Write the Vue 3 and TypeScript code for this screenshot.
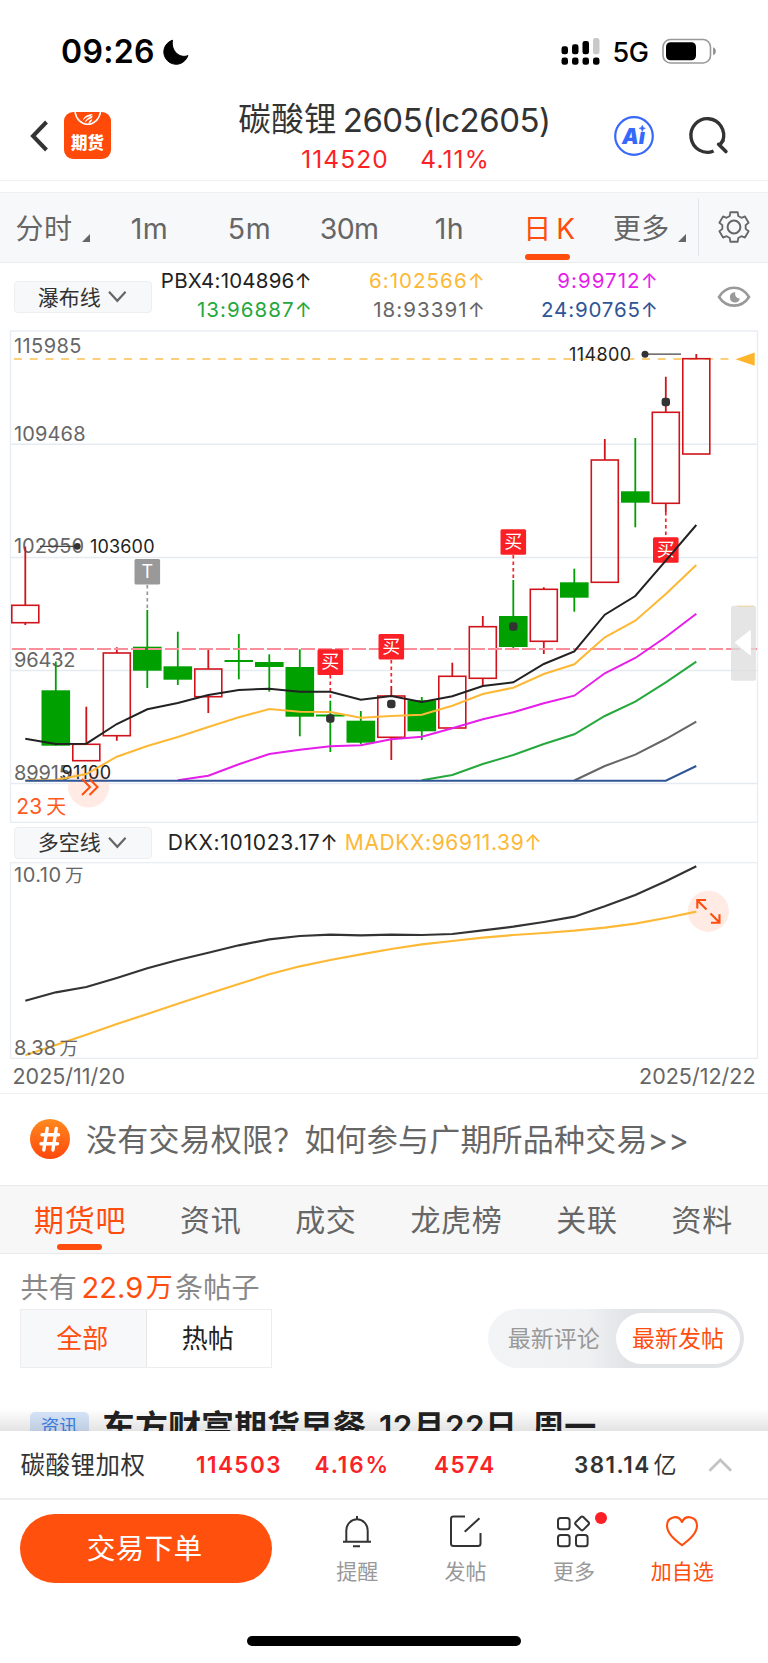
<script setup lang="ts">
interface Candle { top: number; open: number; close: number; bottom: number; up: boolean }
interface Series { color: string; from: number; ys: number[] }

const STEP = 30.5
const FIRST = 25.3
const xAt = (i: number): number => FIRST + i * STEP

const r = (top: number, open: number, close: number, bottom: number): Candle => ({ top, open, close, bottom, up: true })
const g = (top: number, open: number, close: number, bottom: number): Candle => ({ top, open, close, bottom, up: false })

const candles: Candle[] = [
  r(546.5, 605.3, 622.7, 625), g(661.5, 690.3, 745.7, 745.7), r(706.7, 744.3, 760.7, 760.7),
  r(647.3, 653, 735.7, 740.7), g(610, 646.7, 670.7, 688), g(631.7, 666.3, 679.7, 685),
  r(649, 669, 696.7, 713), g(634, 660, 662, 679.3), g(654.3, 662, 667, 691.7),
  g(649.3, 667, 716.7, 736.3), g(700.7, 714.5, 716.5, 752), g(711, 720.7, 742.7, 744.3),
  r(686, 696, 737.3, 760), g(697, 700.3, 731.3, 740), r(662.7, 676.3, 728, 728),
  r(616, 626.7, 678.3, 686), g(580, 616, 647, 648.7), r(587.3, 589.3, 641.3, 654),
  g(568.7, 582.3, 597.7, 611.7), r(439, 460, 582.3, 582.3), g(438, 491.3, 502.7, 527.3),
  r(376.7, 412.3, 503.3, 512), r(354, 358.7, 454, 454),
]

const averages: Series[] = [
  { color: '#222', from: 0, ys: [738.7, 744, 743.7, 724, 709.3, 703, 695, 690, 688.7, 691.7, 691.7, 699.7, 696, 702, 696.3, 686, 682.3, 664, 651.3, 614.7, 596, 560.7, 525] },
  { color: '#fdb836', from: 0, ys: [780.5, 780, 774, 756.7, 746, 737, 727, 717.3, 709, 711.7, 712, 717.7, 716, 714.7, 705.7, 694, 687.7, 674, 664.3, 637.3, 620.7, 594, 565] },
  { color: '#e61eea', from: 5, ys: [780.3, 775.7, 764.3, 754, 749.7, 746.3, 745.3, 739.3, 736.7, 728.3, 719.3, 712.3, 703.3, 695.7, 673.3, 658, 637, 613.7] },
  { color: '#25a83c', from: 13, ys: [780.3, 775, 764, 755, 744, 734.3, 716, 701.7, 682.3, 661.7] },
  { color: '#666', from: 18, ys: [780.5, 766, 754.7, 739, 721.7] },
  { color: '#2f5597', from: 0, ys: [...Array(22).fill(780.7), 766] },
]

const dkx: Series[] = [
  { color: '#333', from: 0, ys: [1000.7, 992.3, 987, 978, 968.3, 960, 952.7, 945.3, 939.3, 936, 934.7, 935.3, 934.7, 935, 934, 930.3, 926.7, 922, 916.7, 906.3, 895, 881.3, 866.3] },
  { color: '#fdb836', from: 0, ys: [1055.3, 1045, 1034.7, 1024, 1014, 1003.7, 993.7, 984, 974.3, 966.3, 960, 954.3, 949, 944.3, 941, 937.7, 935, 933, 930.7, 927.7, 923.7, 918, 911.7] },
]

const points = (s: Series): string => s.ys.map((y, i) => `${xAt(s.from + i).toFixed(1)},${y}`).join(' ')

const gridLines = [444.2, 557.4, 670.6, 783.5]
const priceLabels = [
  { text: '115985', y: 345.3, w: 67.5 }, { text: '109468', y: 433.3, w: 71.5 }, { text: '102950', y: 546, w: 70 },
  { text: '96432', y: 660, w: 61.5 }, { text: '89915', y: 772.3, w: 57 },
]

const marks = [
  { i: 4, y: 559, label: 'T', color: '#999', from: 585, to: 609 },
  { i: 10, y: 649.3, label: '买', color: '#fb1f26', from: 675, to: 701 },
  { i: 12, y: 634, label: '买', color: '#fb1f26', from: 660, to: 686 },
  { i: 16, y: 529.2, label: '买', color: '#fb1f26', from: 555, to: 580 },
  { i: 21, y: 537.2, label: '买', color: '#fb1f26', from: 512, to: 537 },
]
const dots = [{ i: 10, y: 718.5 }, { i: 12, y: 704 }, { i: 16, y: 626.5 }, { i: 21, y: 402 }]

const gearPath = ((): string => {
  const pts: string[] = []
  const at = (deg: number, rad: number): string => {
    const a = (deg * Math.PI) / 180
    return `${(17 + rad * Math.cos(a)).toFixed(2)} ${(17 + rad * Math.sin(a)).toFixed(2)}`
  }
  for (let k = 0; k < 6; k++) {
    const c = -90 + k * 60
    pts.push(at(c - 21, 11.8), at(c - 14, 15.2), at(c + 14, 15.2), at(c + 21, 11.8))
  }
  return `M${pts.join('L')}Z`
})()

const legends = [
  { text: 'PBX4:104896↑', cls: 'k a' }, { text: '6:102566↑', cls: 'y b' }, { text: '9:99712↑', cls: 'm b' },
  { text: '13:96887↑', cls: 'gr b' }, { text: '18:93391↑', cls: 'd b' }, { text: '24:90765↑', cls: 'bl c' },
]
const forumTabs = ['期货吧', '资讯', '成交', '龙虎榜', '关联', '资料']
</script>

<template>
  <div class="page">
    <div class="status">
      <span class="clock">09:26</span>
      <svg class="moon" width="28" height="28" viewBox="0 0 28 28"><path d="M10.5 2.2A12.3 12.3 0 1 0 25.9 17.5C18.5 21 8.5 13.5 10.5 2.2Z" fill="#000" stroke="#000" stroke-width="1" stroke-linejoin="round" /></svg>
      <svg class="signal" width="40" height="28" viewBox="0 0 40 28">
        <g fill="#000">
          <rect x="0.5" y="8.3" width="6.5" height="8" rx="2.4" /><rect x="11" y="6.3" width="6.5" height="10" rx="2.4" /><rect x="21.5" y="3" width="6.5" height="13.3" rx="2.4" />
          <rect v-for="n in 4" :key="n" :x="n * 10.5 - 10" y="19.5" width="6.5" height="7.3" rx="2.4" />
        </g>
        <rect x="32" y="0" width="6.5" height="16.3" rx="2.4" fill="#c9c9c9" />
      </svg>
      <span class="net">5G</span>
      <svg class="battery" width="56" height="28" viewBox="0 0 56 28">
        <rect x="1" y="1.5" width="47.5" height="23.5" rx="7.5" fill="none" stroke="#999" stroke-width="1.6" />
        <rect x="4" y="4.2" width="30" height="18" rx="4.5" fill="#000" />
        <path d="M51.2 9.3C54.6 10.6 54.6 15.9 51.2 17.2Z" fill="#888" />
      </svg>
    </div>

    <header class="header">
      <svg class="back" width="20" height="34" viewBox="0 0 20 34"><path d="M16.5 3L3 17L16.5 31" fill="none" stroke="#333" stroke-width="4" /></svg>
      <div class="logo">
        <svg width="47" height="17" viewBox="0 0 47 17">
          <path d="M11 0A13 15.3 0 0 0 36.5 0" fill="none" stroke="#fff" stroke-width="1.5" />
          <path d="M18.8 8.6C19.5 4.5 23.5 2 28.8 2.2L26.5 4.2C22.8 4.6 20.8 6.3 18.8 8.6ZM20.5 11.3C21.6 7.3 24.5 5 28.8 3.6L28 6C24.8 7 22.4 8.8 20.5 11.3ZM24.4 11.6C24.8 9.2 26.2 7.6 28.3 6.9C28 9.2 26.6 10.8 24.4 11.6Z" fill="#fff" />
        </svg>
        <span>期货</span>
      </div>
      <div class="title">
        <h1><span class="name">碳酸锂</span><span class="code">2605(lc2605)</span></h1>
        <p><span>114520</span><span class="pct">4.11%</span></p>
      </div>
      <svg class="ai" width="42" height="42" viewBox="0 0 42 42">
        <circle cx="21" cy="21" r="18.8" fill="none" stroke="#3668fb" stroke-width="2.2" />
        <text x="9" y="28.8" class="ai-text" textLength="23" lengthAdjust="spacingAndGlyphs">Ai</text>
        <rect x="26" y="9.5" width="8" height="7.5" fill="#fff" />
        <path d="M29.3 10.2L30.3 12.6L32.3 13.3L30.3 14.1L29.3 16.6L28.3 14.1L26.2 13.3L28.3 12.6Z" fill="#3668fb" stroke="#3668fb" stroke-width="0.6" />
      </svg>
      <svg class="search" width="42" height="42" viewBox="0 0 42 42">
        <path d="M34.8 26A16.4 16.8 0 1 0 25.6 36" fill="none" stroke="#333" stroke-width="3.4" stroke-linecap="butt" />
        <path d="M30.6 29.3L37.9 36.6M34.9 25.6L31.8 30" stroke="#333" stroke-width="3.6" stroke-linecap="round" fill="none" />
      </svg>
    </header>

    <nav class="periods">
      <span class="p-first">分时</span><i class="corner" />
      <span class="p">1m</span><span class="p">5m</span><span class="p p30">30m</span><span class="p">1h</span>
      <span class="p on"><b>日</b><b>K</b></span>
      <span class="p-more">更多</span><i class="corner" />
      <i class="bar" />
      <svg class="gear" width="34" height="34" viewBox="0 0 34 34" fill="none" stroke="#666" stroke-width="1.8" stroke-linejoin="round"><path :d="gearPath" /><circle cx="17" cy="17" r="6.4" stroke-width="2" /></svg>
    </nav>

    <div class="indicator">
      <div class="select"><span>瀑布线</span><svg width="19" height="13" viewBox="0 0 19 13"><path d="M1 1.8L9.3 10.8L17.6 1.8" fill="none" stroke="#666" stroke-width="2.2" /></svg></div>
      <div class="legend"><span v-for="l in legends" :key="l.text" :class="l.cls">{{ l.text }}</span></div>
      <svg class="eye" width="34" height="24" viewBox="0 0 34 24">
        <path d="M2 12C9.5-.3 24.5-.3 32 12C24.5 23.5 9.5 23.5 2 12Z" fill="none" stroke="#999" stroke-width="2.6" />
        <path d="M17 7.2A5 5.2 0 1 0 22.8 13.4C20 13.6 17.4 11 18.3 7.3Z" fill="#999" />
      </svg>
    </div>

    <svg class="chart" width="768" height="493" viewBox="0 330 768 493">
      <g stroke="#e6ebf2" stroke-width="1.5" fill="none">
        <path v-for="y in gridLines" :key="y" :d="`M10.5 ${y}H757.5`" />
        <rect x="10.5" y="331" width="747" height="491.3" stroke="#e9edf4" />
      </g>
      <g class="axis"><text v-for="p in priceLabels" :key="p.text" x="14" :y="p.y + 7.3" :textLength="p.w">{{ p.text }}</text></g>
      <path d="M14 359H736" stroke="#fdc050" stroke-width="1.5" stroke-dasharray="8 7.7" />
      <circle cx="88.5" cy="787" r="20.5" fill="#ffebe4" />
      <g class="tag">
        <text x="90" y="553" textLength="64.5">103600</text>
        <text x="569" y="360.5" textLength="62">114800</text>
        <text x="61.5" y="778.8" textLength="49.5">91100</text>
      </g>
      <g stroke="#444" stroke-width="1.2"><path d="M40 546.3H77M645 354.2H681" /></g>
      <g fill="#333"><circle cx="77.3" cy="546.3" r="3.4" /><circle cx="645" cy="354.2" r="3.5" /></g>
      <g v-for="(c, i) in candles" :key="i">
        <template v-if="c.up">
          <path :d="`M${xAt(i)} ${c.top}V${c.open}M${xAt(i)} ${c.close}V${c.bottom}`" stroke="#d0141b" stroke-width="1.8" />
          <rect :x="xAt(i) - 13.5" :y="c.open" width="27" :height="c.close - c.open" fill="none" stroke="#d0141b" stroke-width="1.6" />
        </template>
        <template v-else>
          <path :d="`M${xAt(i)} ${c.top}V${c.bottom}`" stroke="#00a000" stroke-width="1.8" />
          <rect :x="xAt(i) - 14.3" :y="c.open" width="28.6" :height="c.close - c.open" fill="#00a000" />
        </template>
      </g>
      <path d="M12 649H757" stroke="#fa8f9b" stroke-width="1.9" stroke-dasharray="14 3" />
      <g v-for="m in marks" :key="m.i">
        <path :d="`M${xAt(m.i)} ${m.from}V${m.to}`" :stroke="m.color" stroke-width="1.7" stroke-dasharray="3.5 3" />
        <rect :x="xAt(m.i) - 12.8" :y="m.y" width="25.6" height="25.6" rx="1.5" :fill="m.color" />
        <text :x="xAt(m.i)" :y="m.y + 19" class="mark">{{ m.label }}</text>
      </g>
      <rect v-for="d in dots" :key="d.i" :x="xAt(d.i) - 4.2" :y="d.y - 4.2" width="8.4" height="8.4" rx="3" fill="#333" />
      <polyline v-for="s in averages" :key="s.color" :points="points(s)" fill="none" :stroke="s.color" stroke-width="2" />
      <path d="M735.5 359.2L754.7 352.6V365.8Z" fill="#fdb62c" />
      <path d="M82 779L90 787L82 795M89.5 779L97.5 787L89.5 795" fill="none" stroke="#ff4d0d" stroke-width="2" />
      <g class="days"><text x="16.2" y="813.6" textLength="26">23</text><text x="46.3" y="813.6" font-size="20">天</text></g>
      <rect x="731" y="605.7" width="25" height="75" rx="2" fill="#dcdcdc" fill-opacity=".75" />
      <path d="M737 606.2H754" stroke="#fdc050" stroke-opacity=".5" />
      <path d="M735 642.5L750.3 630.5V655Z" fill="#fff" stroke="#fff" />
    </svg>

    <div class="sub">
      <div class="select second"><span>多空线</span><svg width="19" height="13" viewBox="0 0 19 13"><path d="M1 1.8L9.3 10.8L17.6 1.8" fill="none" stroke="#666" stroke-width="2.2" /></svg></div>
      <span class="dkx">DKX:101023.17↑</span><span class="madkx">MADKX:96911.39↑</span>
    </div>

    <svg class="chart" width="768" height="198" viewBox="0 862 768 198">
      <rect x="10.5" y="862.7" width="747" height="195.6" fill="none" stroke="#e9edf4" stroke-width="1.3" />
      <circle cx="708.3" cy="911.3" r="20.6" fill="#ffebe4" />
      <polyline v-for="s in dkx" :key="s.color" :points="points(s)" fill="none" :stroke="s.color" stroke-width="2.2" />
      <g class="axis">
        <text x="14" y="881.8" textLength="47">10.10</text><text x="65" y="881.5" font-size="18.5">万</text>
        <text x="14" y="1055" textLength="42">8.38</text><text x="59.5" y="1054.5" font-size="18.5">万</text>
      </g>
      <path d="M706.5 909.5L697.5 900.5M697.3 908.5V900H706M710.5 913.5L719.5 922.5M719.5 914.3V922.7H711" fill="none" stroke="#ff4d0d" stroke-width="2.1" />
    </svg>

    <div class="dates"><span>2025/11/20</span><span>2025/12/22</span></div>

    <div class="notice">
      <svg width="40" height="40" viewBox="0 0 40 40">
        <defs><linearGradient id="hash" x1="0" y1="0" x2="0" y2="1"><stop offset="0" stop-color="#ff8a1f" /><stop offset="1" stop-color="#ff470d" /></linearGradient></defs>
        <circle cx="20" cy="20" r="20" fill="url(#hash)" />
        <path d="M17.2 9.5L13.8 31M26.3 9.5L22.9 31M12 15.7H28.5M11 24.8H27.5" stroke="#fff" stroke-width="3.4" stroke-linecap="round" />
      </svg>
      <span>没有交易权限？如何参与广期所品种交易&gt;&gt;</span>
    </div>

    <nav class="forum"><span v-for="(t, i) in forumTabs" :key="t" :class="{ active: i === 0 }">{{ t }}</span></nav>

    <section class="feed">
      <p class="count"><span>共有</span><em class="num">22.9</em><em class="wan">万</em><span class="rest">条帖子</span></p>
      <div class="filters">
        <div class="seg"><span class="sel">全部</span><span>热帖</span></div>
        <div class="switch"><span>最新评论</span><b>最新发帖</b></div>
      </div>
      <div class="post"><span class="badge">资讯</span><h2><span>东方财富期货早餐</span><span class="dt">12月22日</span><span>周一</span></h2></div>
      <div class="fade" />
    </section>

    <footer class="sheet">
      <div class="quote">
        <span class="qn">碳酸锂加权</span><b class="q1">114503</b><b class="q2">4.16%</b><b class="q3">4574</b><b class="q4">381.14</b><span class="q5">亿</span>
        <svg width="25" height="16" viewBox="0 0 25 16"><path d="M1.5 13.7L12.3 3L23.1 13.7" fill="none" stroke="#c4c4c4" stroke-width="2.8" /></svg>
      </div>
      <div class="actions">
        <button class="trade">交易下单</button>
        <div class="tool"><svg width="36" height="36" viewBox="0 0 36 36" fill="none" stroke="#333" stroke-width="2"><path d="M7.3 28.7V17.5a10.7 11.2 0 0 1 21.4 0V28.7M4 28.7H32M18 6V3M14 33.3H21" /></svg><span>提醒</span></div>
        <div class="tool"><svg width="36" height="36" viewBox="0 0 36 36" fill="none" stroke="#333" stroke-width="2"><path d="M17 3.6H5.5Q3 3.6 3 6V30.4Q3 32.9 5.5 32.9H30Q32.5 32.9 32.5 30.4V20M16.7 18.7L31.5 5.3" /></svg><span>发帖</span></div>
        <div class="tool"><svg width="36" height="36" viewBox="0 0 36 36" fill="none" stroke="#333" stroke-width="2"><rect x="2" y="5" width="11.6" height="11.3" rx="2.6" /><rect x="2" y="22" width="11.6" height="11.3" rx="2.6" /><rect x="20" y="22" width="11.6" height="11.3" rx="2.6" /><rect x="20.7" y="5" width="10.8" height="10.8" rx="2" transform="rotate(45 26.1 10.4)" /></svg><i class="red" /><span>更多</span></div>
        <div class="tool fav"><svg width="36" height="36" viewBox="0 0 36 36" fill="none" stroke="#ff4d0d" stroke-width="2.1" stroke-linejoin="round"><path d="M18 32.3C12 27.5 3 21 3 12.8C3 3.2 14.3 1.3 18 9C21.7 1.3 33 3.2 33 12.8C33 21 24 27.5 18 32.3Z" /></svg><span>加自选</span></div>
      </div>
      <div class="home" />
    </footer>
  </div>
</template>

<style>
body { margin: 0; background: #fff; }
</style>

<style scoped>
.page { width: 768px; height: 1663px; overflow: hidden; display: flex; flex-direction: column; background: #fff; font-family: Inter, "Noto Sans CJK SC", sans-serif; color: #333; }
.page > * { flex: none; box-sizing: border-box; }
svg { display: block; flex: none; }
p, h1, h2 { margin: 0; font-weight: 400; }
i, em { font-style: normal; }
span, b, em { white-space: nowrap; }

.status { height: 102px; display: flex; align-items: flex-start; padding-left: 61px; color: #000; }
.clock { font-size: 32px; font-weight: 600; line-height: 40px; margin-top: 32px; width: 101px; letter-spacing: .3px; }
.moon { margin-top: 37.5px; }
.signal { margin: 37.7px 0 0 371px; }
.net { font-size: 27px; font-weight: 500; line-height: 40px; margin-top: 32.5px; margin-left: 11.5px; width: 49.5px; letter-spacing: -.4px; }
.battery { margin-top: 37.5px; }

.header { height: 79px; border-bottom: 1.5px solid #f1f1f3; display: flex; align-items: flex-start; }
.back { margin: 17px 0 0 30px; width: 20px; }
.logo { width: 47px; height: 47.5px; margin: 9.5px 0 0 14px; border-radius: 9px; background: #ff4a0a; color: #fff; overflow: hidden; }
.logo span { display: block; text-align: center; font-size: 16.5px; font-weight: 900; line-height: 20px; margin-top: 4px; }
.title { width: 504px; box-sizing: border-box; padding-left: 63px; }
.title h1 { display: flex; justify-content: center; line-height: 40px; margin-top: -2px; color: #333; }
.name { font-size: 32.5px; letter-spacing: .3px; margin-right: 6px; }
.code { font-size: 33px; letter-spacing: -.5px; }
.title p { display: flex; justify-content: center; font-size: 24.5px; line-height: 30px; letter-spacing: 1.1px; color: #fb2226; margin: 4px 0 0 2px; }
.pct { margin-left: 31.5px; }
.ai { margin: 13px 0 0 -2px; }
.ai-text { font: italic 900 22px Inter, sans-serif; fill: #3668fb; }
.search { margin: 13px 0 0 32.5px; }

.periods { height: 71px; margin-top: 11px; background: #f7f8fa; border-top: 1px solid #efeff1; border-bottom: 1px solid #ebecee; display: flex; line-height: 40px; padding-top: 16px; font-size: 28.5px; color: #666; }
.p-first { width: 65px; margin-left: 15.5px; font-size: 28px; letter-spacing: .6px; }
.corner { width: 0; height: 0; border-left: 8px solid transparent; border-bottom: 8px solid #666; margin: 25px 0 0 1px; }
.p { width: 100px; text-align: center; letter-spacing: .5px; }
.corner + .p { margin-left: 10px; }
.p30 { letter-spacing: -.6px; text-indent: -1px; }
.on { color: #ff4d0d; display: flex; justify-content: center; gap: 4.5px; position: relative; }
.on::after { content: ''; position: absolute; left: 25.5px; top: 45px; width: 45px; height: 6px; border-radius: 3px; background: #ff4d0d; }
.on b { font-weight: 400; font-size: 28px; }
.p-more { width: 64px; margin-left: 13.5px; font-size: 28px; letter-spacing: .3px; }
.bar { width: 1px; height: 57px; background: #e2e3e6; margin: -10px 0 0 12px; }
.gear { margin: 1px 0 0 17.5px; }

.indicator { height: 67px; display: flex; }
.select { box-sizing: border-box; width: 138.5px; height: 31.5px; margin: 18px 0 0 13.8px; border: 1px solid #edeef1; border-radius: 4px; background: #f7f8fa; display: flex; align-items: center; padding-left: 23px; font-size: 21px; line-height: 29px; color: #333; }
.select span { width: 70.5px; padding-top: 1px; }
.legend { width: 505px; display: grid; grid-template-columns: 158.5px 173px 173px; grid-auto-rows: 29px; line-height: 29px; font-size: 20.5px; padding-top: 2.7px; text-align: right; }
.legend span { margin-right: -2px; }
.k { color: #222; } .y { color: #fdb836; } .m { color: #e61eea; } .gr { color: #25a83c; } .d { color: #666; } .bl { color: #2f5597; }
.a { letter-spacing: .2px; } .b { letter-spacing: 1.05px; } .c { letter-spacing: .85px; }
.legend .a { margin-right: -1px; }
.eye { margin: 22px 0 0 59.5px; }

.axis { font-size: 20px; fill: #666; }
.tag { font-size: 18px; fill: #222; }
.mark { font-size: 18px; fill: #fff; text-anchor: middle; }
.days { font-size: 21px; fill: #ff5a1f; }

.sub { height: 39px; margin-right: 10px; border-right: 1px solid #e9edf4; display: flex; font-size: 21px; line-height: 40px; }
.second { margin-top: 4px; }
.second span { padding-top: 0; }
.dkx { width: 177px; margin-left: 15.5px; letter-spacing: .72px; color: #222; }
.madkx { letter-spacing: .63px; color: #fdb836; }

.dates { height: 33px; display: flex; justify-content: space-between; padding: 0 12.5px; line-height: 33px; font-size: 21.5px; color: #666; }

.notice { height: 92px; border-top: 1.5px solid #f0f0f0; display: flex; align-items: center; padding: 0 0 1px 29.5px; font-size: 31px; line-height: 40px; color: #666; }
.notice span { margin-left: 16.5px; letter-spacing: .2px; padding-top: 1px; }

.forum { height: 69px; background: #f7f7f7; border-top: 1px solid #eaeaea; border-bottom: 1px solid #eaeaea; display: flex; justify-content: space-between; padding: 0 35px 0 34px; font-size: 30px; letter-spacing: .7px; line-height: 68px; color: #666; }
.active { color: #ff4d0d; position: relative; }
.active::after { content: ''; position: absolute; left: 23px; bottom: 3.5px; width: 45px; height: 6px; border-radius: 3px; background: #ff4d0d; }

.feed { height: 177px; overflow: hidden; position: relative; }
.count { display: flex; font-size: 28px; line-height: 40px; padding: 13.5px 0 0 20.5px; color: #888; letter-spacing: .3px; }
.count em { color: #ff4d0d; }
.count .num { font-size: 29px; margin: 0 2.5px 0 4.5px; letter-spacing: 0; }
.count .wan { font-size: 27px; }
.rest { margin-left: 2px; }
.filters { display: flex; justify-content: space-between; padding: 1.5px 24.5px 0 20px; }
.seg { display: flex; box-sizing: border-box; width: 252px; height: 59px; border: 1.5px solid #ededf0; font-size: 26px; line-height: 58.5px; color: #222; }
.seg span { flex: 1; text-align: center; text-indent: -2px; }
.seg .sel { background: #f7f8fa; color: #ff4d0d; border-right: 1px solid #e6e6e9; }
.switch { width: 255.5px; height: 59px; box-sizing: border-box; border-radius: 30px; display: flex; padding: 4px 4px 4px 0; font-size: 23px; line-height: 52.5px; background: linear-gradient(90deg, #f3f4f6 0, #f0f1f3 38%, #e2e3e6 55%, #e3e4e7 100%); color: #999; }
.switch span { width: 127.5px; text-align: center; text-indent: 4px; }
.switch b { width: 124px; text-align: center; background: #fff; border-radius: 26px; color: #ff4d0d; font-weight: 400; text-indent: 1px; }
.post { display: flex; padding: 44px 0 0 30px; align-items: flex-start; }
.badge { width: 58.5px; height: 31px; border-radius: 5px; background: #d7e6fb; color: #3f83ea; font-size: 18.5px; line-height: 29px; text-align: center; }
.post h2 { display: flex; font-size: 33px; font-weight: 600; color: #222; line-height: 40px; margin: -5px 0 0 13.5px; }
.post .dt { margin: 0 15px 0 13px; font-size: 31.5px; letter-spacing: .5px; }
.post h2 span:last-child { font-size: 32px; }
.fade { position: absolute; left: 0; right: 0; bottom: 0; height: 22px; background: linear-gradient(rgba(0, 0, 0, 0), rgba(0, 0, 0, .11)); }

.sheet { height: 232px; background: #fff; display: flex; flex-direction: column; }
.quote { height: 69px; box-sizing: border-box; border-bottom: 2px solid #efefef; display: flex; align-items: center; line-height: 40px; font-size: 22.5px; letter-spacing: 1.45px; color: #333; }
.quote b { font-weight: 600; color: #fb2226; }
.qn { font-size: 24.5px; letter-spacing: .5px; margin-left: 20.5px; width: 175.5px; }
.q1 { width: 118.5px; } .q2 { width: 119.5px; letter-spacing: 1.95px; } .q3 { width: 140px; } .quote .q4 { width: 79.5px; color: #333; }
.q5 { font-size: 23px; width: 54px; }
.actions { display: flex; height: 90px; box-sizing: border-box; padding: 14px 0 0 20px; }
.trade { width: 252px; height: 69px; border: 0; padding: 0 3px 0 0; border-radius: 34.5px; background: #ff500d; color: #fff; font: 400 28.7px/70.5px Inter, "Noto Sans CJK SC", sans-serif; letter-spacing: .2px; margin-right: 31px; }
.tool { width: 108.4px; display: flex; flex-direction: column; align-items: center; font-size: 21px; color: #999; position: relative; }
.tool svg { margin-top: -1.5px; }
.tool span { line-height: 30px; margin-top: 8.5px; }
.fav span { color: #ff4d0d; }
.red { position: absolute; left: 75px; top: -2px; width: 12px; height: 12px; border-radius: 50%; background: #fb1f26; }
.home { width: 273.5px; height: 10px; border-radius: 5px; background: #000; margin: 46px 0 0 247.3px; }
</style>
